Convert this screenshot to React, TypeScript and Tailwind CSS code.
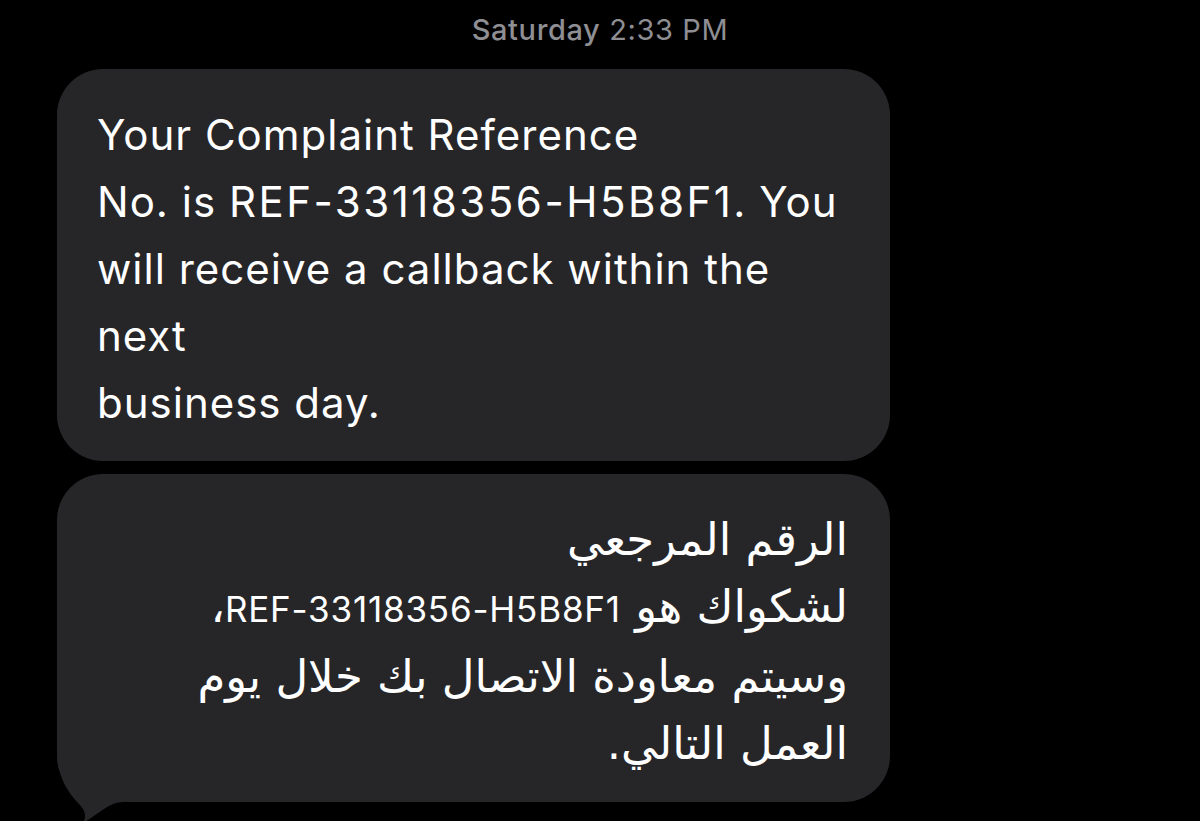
export default function App() {
  return (
    <div
      className="relative h-[821px] w-[1200px] overflow-hidden bg-black text-white"
      style={{ fontFamily: "Inter, 'Liberation Sans', 'DejaVu Sans', sans-serif" }}
    >
      {/* Timestamp */}
      <div className="flex justify-center pt-[13px] text-[29px] leading-[34px] tracking-[0.6px] text-[#8e8e93]">
        <span className="font-medium">Saturday</span>
        <span className="ml-[9px]">2:33 PM</span>
      </div>

      {/* English bubble */}
      <div className="ml-[57px] mt-[22px] w-[833px] whitespace-nowrap rounded-[46px] bg-[#262629] pl-[40px] pr-[30px] pt-[32px] pb-[25px] text-[42px] leading-[67px] tracking-[1px]">
        Your Complaint Reference
        <br />
        No. is <span className="tracking-[2.5px]">REF-33118356-H5B8F1</span>. You
        <br />
        will receive a callback within the
        <br />
        next
        <br />
        business day.
      </div>

      {/* Arabic bubble */}
      <div className="relative ml-[57px] mt-[13px] w-[833px]">
        <div
          dir="rtl"
          className="whitespace-nowrap rounded-[46px] bg-[#262629] pr-[42px] pl-[30px] pt-[32px] pb-[25px] text-right text-[45px] leading-[67px]"
          style={{ fontFamily: "'DejaVu Sans', Inter, sans-serif" }}
        >
          الرقم المرجعي
          <br />
          لشكواك هو{" "}
          <span className="text-[35px] tracking-[0.8px]" style={{ fontFamily: "Inter, sans-serif" }}>
            REF-33118356-H5B8F1
          </span>
          ،
          <br />
          وسيتم معاودة الاتصال بك خلال يوم
          <br />
          العمل التالي.
        </div>
        {/* tail */}
        <svg className="absolute left-[0px] bottom-[-21px]" width="90" height="71" viewBox="0 0 90 71">
          <path
            d="M0 0 L90 0 L90 50 L66 50 C52 50 42 62 26 71 C30 64 28 58 22 52 C8 38 0 20 0 0 Z"
            fill="#262629"
          />
        </svg>
      </div>
    </div>
  );
}
